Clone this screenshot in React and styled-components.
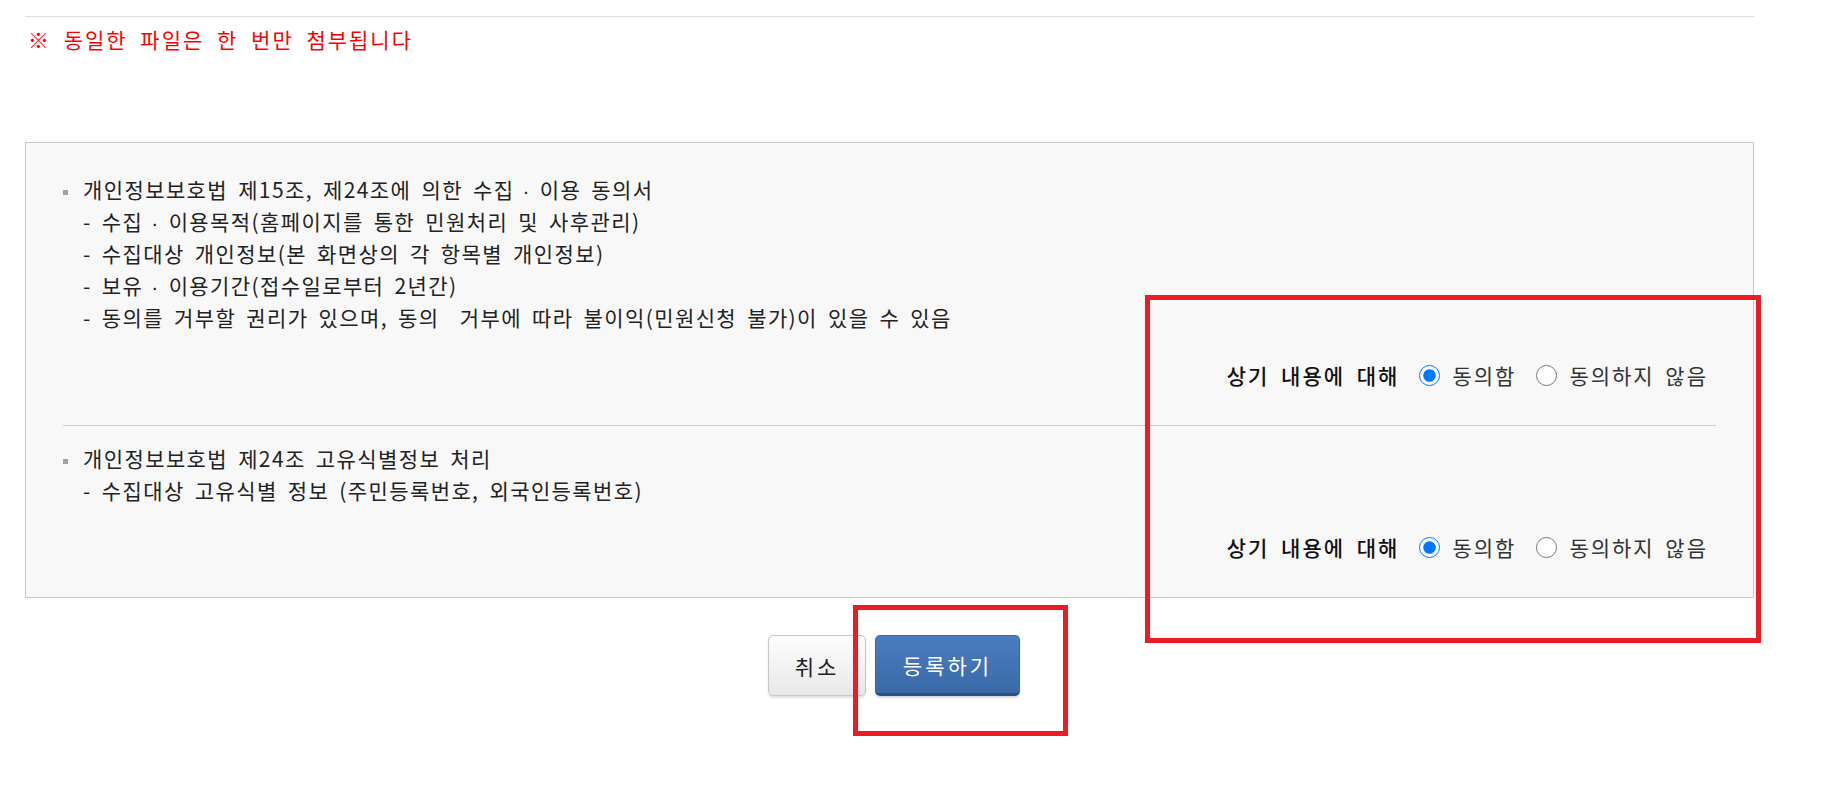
import React from "react";
import styled, { createGlobalStyle } from "styled-components";

const GlobalStyle = createGlobalStyle`
  body {
    margin: 0;
    background: #fff;
    font-family: "Noto Sans CJK KR", "Noto Sans", sans-serif;
  }
`;

const consentItems = [
  {
    title: "개인정보보호법 제15조, 제24조에 의한 수집 · 이용 동의서",
    lines: [
      "- 수집 · 이용목적(홈페이지를 통한 민원처리 및 사후관리)",
      "- 수집대상 개인정보(본 화면상의 각 항목별 개인정보)",
      "- 보유 · 이용기간(접수일로부터 2년간)",
      "- 동의를 거부할 권리가 있으며, 동의\u00a0\u00a0거부에 따라 불이익(민원신청 불가)이 있을 수 있음",
    ],
    name: "agree1",
  },
  {
    title: "개인정보보호법 제24조 고유식별정보 처리",
    lines: ["- 수집대상 고유식별 정보 (주민등록번호, 외국인등록번호)"],
    name: "agree2",
  },
];

// the middle dot is narrow in the original font
const renderText = (text) =>
  text.split(" · ").map((part, i) => (
    <React.Fragment key={i}>
      {i > 0 && <Dot>·</Dot>}
      {part}
    </React.Fragment>
  ));

const App = () => {
  return (
    <>
      <GlobalStyle />
      <Page>
        <Wrap>
          <Notice>※ 동일한 파일은 한 번만 첨부됩니다</Notice>

          <Panel>
            {consentItems.map((item, index) => (
              <Section key={item.name} $first={index === 0}>
                <TextBlock>
                  <Line>
                    <Bullet />
                    {renderText(item.title)}
                  </Line>
                  {item.lines.map((line) => (
                    <Line key={line} $sub>
                      {renderText(line)}
                    </Line>
                  ))}
                </TextBlock>
                <AgreeRow $first={index === 0}>
                  <AgreeLabel>상기 내용에 대해</AgreeLabel>
                  <RadioLabel>
                    <Radio type="radio" name={item.name} defaultChecked />
                    동의함
                  </RadioLabel>
                  <RadioLabel>
                    <Radio type="radio" name={item.name} />
                    동의하지 않음
                  </RadioLabel>
                </AgreeRow>
              </Section>
            ))}
          </Panel>

          <ButtonRow>
            <CancelButton>취소</CancelButton>
            <SubmitButton>등록하기</SubmitButton>
          </ButtonRow>
        </Wrap>

        {/* annotation boxes drawn over the screenshot */}
        <Mark style={{ left: 1145, top: 295, width: 616, height: 348 }} />
        <Mark style={{ left: 853, top: 605, width: 215, height: 131 }} />
      </Page>
    </>
  );
};

export default App;

const Page = styled.div`
  position: relative;
  padding: 16px 0 0 25px;
  min-height: 805px;
  box-sizing: border-box;
`;

const Wrap = styled.div`
  width: 1729px;
  border-top: 1px solid #dcdcdc;
`;

const Notice = styled.p`
  margin: 10px 0 0 3px;
  color: #ff0000;
  font-size: 21px;
  line-height: 24px;
  letter-spacing: 2px;
  word-spacing: 6px;
`;

const Panel = styled.div`
  margin-top: 91px;
  padding: 0 37px;
  background: #f8f8f8;
  border: 1px solid #c8c8c8;
`;

const Section = styled.div`
  padding: ${(p) => (p.$first ? "30px 0 34px" : "16px 0 34px")};
  border-top: ${(p) => (p.$first ? "none" : "1px solid #cccccc")};
`;

const TextBlock = styled.div`
  color: #222;
  font-size: 21px;
  line-height: 32px;
  letter-spacing: 1.4px;
  word-spacing: 4px;
`;

const Line = styled.div`
  height: 32px;
  padding-left: ${(p) => (p.$sub ? "20px" : "0")};
  white-space: pre;
`;

const Dot = styled.span`
  display: inline-block;
  margin: 0 9px 0 8px;
  font-family: "Liberation Sans", sans-serif;
  line-height: 1;
`;

const Bullet = styled.span`
  display: inline-block;
  width: 5px;
  height: 5px;
  margin-right: 15px;
  vertical-align: middle;
  background: #a3a3a3;
`;

const AgreeRow = styled.div`
  display: flex;
  justify-content: flex-end;
  align-items: center;
  height: 32px;
  margin-top: ${(p) => (p.$first ? "26px" : "25px")};
  padding-right: 8px;
`;

const AgreeLabel = styled.span`
  margin-right: 20px;
  color: #111;
  font-size: 21px;
  font-weight: 500;
  letter-spacing: 2px;
  word-spacing: 5px;
`;

const RadioLabel = styled.label`
  display: flex;
  align-items: center;
  color: #333;
  font-size: 21px;
  letter-spacing: 2px;
  word-spacing: 4px;

  & + & {
    margin-left: 20px;
  }
`;

const Radio = styled.input`
  width: 21px;
  height: 21px;
  margin: 0 12px 0 0;
`;

const ButtonRow = styled.div`
  display: flex;
  justify-content: center;
  gap: 9px;
  margin-top: 37px;
  padding-left: 9px;
`;

const BaseButton = styled.button`
  height: 61px;
  border-radius: 5px;
  font-family: "Noto Sans CJK KR", sans-serif;
  font-size: 21px;
  letter-spacing: 3px;
  cursor: pointer;
`;

const CancelButton = styled(BaseButton)`
  width: 98px;
  color: #222;
  background: linear-gradient(#fdfdfd, #e8e8e8);
  border: 1px solid #c6c6c6;
  box-shadow: 0 2px 2px rgba(0, 0, 0, 0.12);
`;

const SubmitButton = styled(BaseButton)`
  width: 145px;
  color: #fff;
  background: linear-gradient(#4a7dc0, #3a69a8);
  border: 1px solid #3a6aa8;
  border-bottom: 3px solid #2b5189;
  box-shadow: 0 2px 2px rgba(0, 0, 0, 0.15);
`;

const Mark = styled.div`
  position: absolute;
  box-sizing: border-box;
  border: 5px solid #ed1c24;
  pointer-events: none;
`;
